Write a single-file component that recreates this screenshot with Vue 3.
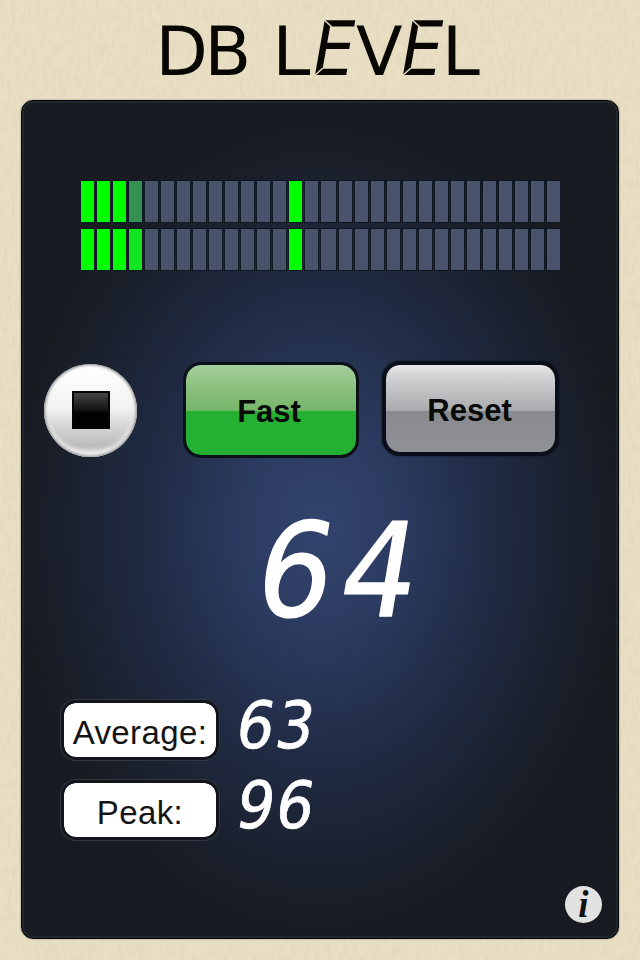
<script setup>
import { ref, computed } from 'vue'

const SEGMENTS = 30

const channels = ref([
  { name: 'left', full: 3, partial: 'dim', peak: 13 },
  { name: 'right', full: 3, partial: 'strong', peak: 13 }
])
const level = ref(64)
const average = ref(63)
const peak = ref(96)

const levelDigits = computed(() => String(level.value).split(''))
const stats = computed(() => [
  { label: 'Average:', digits: String(average.value).split('') },
  { label: 'Peak:', digits: String(peak.value).split('') }
])

function segmentClass(channel, index) {
  if (index < channel.full || index === channel.peak) return 'lit'
  if (index === channel.full) return channel.partial
  return ''
}
</script>

<template>
  <div class="app">
    <svg class="paper" width="640" height="960">
      <filter id="grain" x="0" y="0" width="100%" height="100%">
        <feTurbulence type="fractalNoise" baseFrequency="0.25 0.09" numOctaves="2" seed="4" />
        <feColorMatrix values="0 0 0 0 0.58  0 0 0 0 0.52  0 0 0 0 0.34  0.4 0 0 0 -0.14" />
      </filter>
      <rect width="640" height="960" filter="url(#grain)" />
    </svg>

    <header class="header">
      <svg class="title" width="340" height="100" viewBox="150 0 340 100">
        <text class="plain" x="155.500 204.500 272.500" y="75">DBL</text>
        <text class="slant" transform="translate(308.500 75) skewX(-10)" textLength="42" lengthAdjust="spacingAndGlyphs">E</text>
        <text class="plain" x="356" y="75">V</text>
        <text class="slant" transform="translate(396.500 75) skewX(-10)" textLength="42" lengthAdjust="spacingAndGlyphs">E</text>
        <text class="plain" x="442" y="75">L</text>
        <path class="title-joint" d="M322 18l10 9M313 77l10-9M410 18l10 9M401 77l10-9" />
      </svg>
    </header>

    <main class="panel">
      <section class="meter">
        <div v-for="channel in channels" :key="channel.name" class="channel">
          <i
            v-for="n in SEGMENTS"
            :key="n"
            class="segment"
            :class="[segmentClass(channel, n - 1), { wide: n === 16 }]"
          ></i>
        </div>
      </section>

      <section class="controls">
        <button class="stop" aria-label="Stop"><span></span></button>
        <button class="button fast">Fast</button>
        <button class="button reset">Reset</button>
      </section>

      <svg class="readout level" width="170" height="100" viewBox="-1 -1 170 100">
        <g v-for="(digit, i) in levelDigits" :key="i" :transform="`translate(${i * 84 + 16.4} 0) skewX(-9.5)`">
          <text class="digit" x="-23" y="97" textLength="75" lengthAdjust="spacingAndGlyphs">{{ digit }}</text>
        </g>
      </svg>

      <section class="stats">
        <div v-for="stat in stats" :key="stat.label" class="stat">
          <span class="label">{{ stat.label }}</span>
          <svg class="readout" width="83" height="51" viewBox="-1 -1 166 102">
            <g v-for="(digit, i) in stat.digits" :key="i" :transform="`translate(${i * 79 + 16.4} 0) skewX(-9.5)`">
              <text class="digit" x="-22" y="98" textLength="75" lengthAdjust="spacingAndGlyphs">{{ digit }}</text>
            </g>
          </svg>
        </div>
      </section>

      <button class="info">i</button>
    </main>
  </div>
</template>

<style>
body {
  margin: 0;
}
</style>

<style scoped>
.app {
  position: relative;
  width: 640px;
  height: 960px;
  overflow: hidden;
  box-sizing: border-box;
  padding: 0 21px;
  background: #e9dfc4;
  font-family: 'Liberation Sans', Arial, sans-serif;
}
.paper {
  position: absolute;
  inset: 0;
}
.header {
  position: relative;
  height: 100px;
  display: flex;
  justify-content: center;
}
.title {
  display: block;
}
.plain {
  font-family: 'DejaVu Sans', sans-serif;
  font-size: 68px;
  fill: #080704;
}
.slant {
  font-family: 'DejaVu Sans', sans-serif;
  font-size: 75px;
  fill: #080704;
}
.title-joint {
  stroke: #e6dbc0;
  stroke-width: 1.5;
}
.panel {
  position: relative;
  box-sizing: border-box;
  width: 598px;
  height: 839px;
  display: flex;
  flex-direction: column;
  padding: 80px 0 0;
  border: 1px solid #05070b;
  border-radius: 12px;
  background: radial-gradient(ellipse 310px 420px at 50% 51%, #32446e 0%, #2c3b60 25%, #202b44 55%, #1a202d 82%, #171a20 100%);
  box-shadow: inset 0 0 0 2px #20262b, 0 0 2px #8b846f;
}
.meter {
  display: grid;
  gap: 7px;
  padding-left: 59px;
}
.channel {
  display: flex;
  gap: 3px;
  height: 41px;
}
.segment {
  width: 13px;
  background: repeating-linear-gradient(90deg, #4a546b 0 3px, #455068 3px 4px);
  box-shadow: 0 0 0 1px #111722;
}
.segment.wide {
  width: 15px;
}
.segment.lit {
  background: #00ff00;
}
.segment.dim {
  background: #369052;
}
.segment.strong {
  background: #12e520;
}
.controls {
  display: flex;
  align-items: center;
  height: 98px;
  margin-top: 91px;
  padding-left: 22px;
}
button {
  padding: 0;
  border: 0;
  box-sizing: border-box;
  font-family: inherit;
}
.stop {
  display: grid;
  place-items: center;
  width: 93px;
  height: 93px;
  border-radius: 50%;
  background: linear-gradient(#fff 0%, #f2f2f3 48%, #dededf 60%, #bcbcbd 88%, #ddd 100%);
  box-shadow: inset 0 0 3px 1px #858585, inset 0 -4px 4px 1px #f4f4f4;
}
.stop span {
  width: 38px;
  height: 38px;
  box-sizing: border-box;
  border: 2px solid #050505;
  background: linear-gradient(#444 0%, #161616 48%, #020202 60%);
}
.button {
  width: 176px;
  height: 96px;
  border: 3px solid #0b1116;
  border-radius: 18px;
  color: #070a07;
  font-size: 31px;
  font-weight: 700;
  line-height: 36px;
  padding: 3px 4px 0 0;
}
.fast {
  margin-left: 46px;
  background: linear-gradient(#a5cf9e 0%, #8fc283 22%, #75b568 51%, #24b032 51%, #24b032 100%) padding-box;
}
.reset {
  margin-left: 23px;
  width: 177px;
  height: 95px;
  margin-top: -4px;
  padding: 6px 2px 0 0;
  border: 4px solid #090e18;
  background: linear-gradient(#e9e9ea 0%, #d1d1d3 14%, #a9aaad 53%, #898a90 53%, #909197 100%) padding-box;
  box-shadow: 0 0 2px #0b101c;
}
.readout {
  display: block;
  overflow: visible;
}
.level {
  margin: 59px 0 0 251px;
}
.digit {
  font-family: 'DejaVu Sans', sans-serif;
  font-size: 130px;
  fill: #fff;
  stroke: #fff;
  stroke-width: 1.5;
  stroke-linejoin: round;
}
.stats {
  display: grid;
  gap: 20px;
  margin: 82px 0 0 39px;
}
.stat {
  display: flex;
  gap: 25px;
  height: 60px;
}
.stat .readout {
  margin-top: -2px;
}
.label {
  box-sizing: border-box;
  width: 158px;
  height: 60px;
  border: 3px solid #11151b;
  border-radius: 15px;
  background: #fff;
  background-clip: padding-box;
  box-shadow: 0 0 0 1px #34383e;
  color: #141414;
  font-size: 33px;
  letter-spacing: 0.4px;
  line-height: 59px;
  text-align: center;
}
.info {
  position: absolute;
  right: 16px;
  bottom: 15px;
  width: 37px;
  height: 37px;
  border-radius: 50%;
  background: #e2e2e3;
  color: #111;
  font: italic 700 37px/34px 'Liberation Serif', serif;
  text-align: center;
}
</style>
